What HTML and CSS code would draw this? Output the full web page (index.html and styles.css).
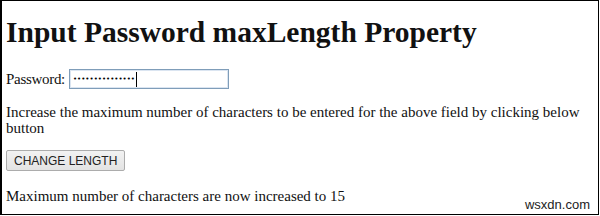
FILE: index.html
```html
<!DOCTYPE html>
<html lang="en">

<head>
    <meta charset="UTF-8">
    <title>Input Password maxLength Property</title>
    <link rel="stylesheet" href="styles.css">
</head>

<body>
    <div class="frame">
        <h1>Input Password maxLength Property</h1>
        <div class="row">
            <label>Password:</label>
            <span class="field">&bull;&bull;&bull;&bull;&bull;&bull;&bull;&bull;&bull;&bull;&bull;&bull;&bull;&bull;&bull;<i class="caret"></i></span>
        </div>
        <p class="info">Increase the maximum number of characters to be entered for the above field by clicking below button</p>
        <button class="btn">CHANGE LENGTH</button>
        <p class="result">Maximum number of characters are now increased to 15</p>
        <div class="mark">wsxdn.com</div>
    </div>
</body>

</html>
```
FILE: styles.css
```css
* {
    margin: 0;
    padding: 0;
    box-sizing: border-box;
}

body {
    width: 600px;
    height: 216px;
    background: #fff;
    font-family: "Liberation Serif", serif;
    font-size: 15px;
    line-height: 16px;
    color: #111;
}

.frame {
    position: relative;
    width: 599px;
    height: 215px;
    border: 1px solid #000;
    border-left-width: 2px;
    padding: 15px 4px 0;
}

h1 {
    font-size: 29.5px;
    font-weight: bold;
    line-height: 33px;
}

.row {
    display: flex;
    align-items: center;
    gap: 4px;
    margin-top: 20px;
}

.row label {
    letter-spacing: -0.3px;
}

.field {
    display: flex;
    align-items: center;
    width: 160px;
    height: 20px;
    border: 1px solid #7f9db9;
    box-shadow: inset 0 0 0 1px #dbe5f1;
    padding-left: 3px;
    font-family: "DejaVu Sans", sans-serif;
    font-size: 7px;
    color: #000;
}

.caret {
    display: inline-block;
    width: 1px;
    height: 15px;
    background: #000;
    margin-left: 1px;
}

.info {
    margin-top: 15px;
}

.btn {
    display: block;
    margin-top: 14px;
    height: 21px;
    padding: 0 7px;
    border: 1px solid #acacac;
    border-radius: 2px;
    background: linear-gradient(#f2f2f2, #e3e3e3);
    font-family: "Liberation Sans", sans-serif;
    font-size: 12px;
    color: #222;
}

.result {
    margin-top: 17px;
}

.mark {
    position: absolute;
    right: 8px;
    bottom: 2px;
    font-family: "Liberation Sans", sans-serif;
    font-size: 13px;
    line-height: 15px;
    color: #222;
}
```
